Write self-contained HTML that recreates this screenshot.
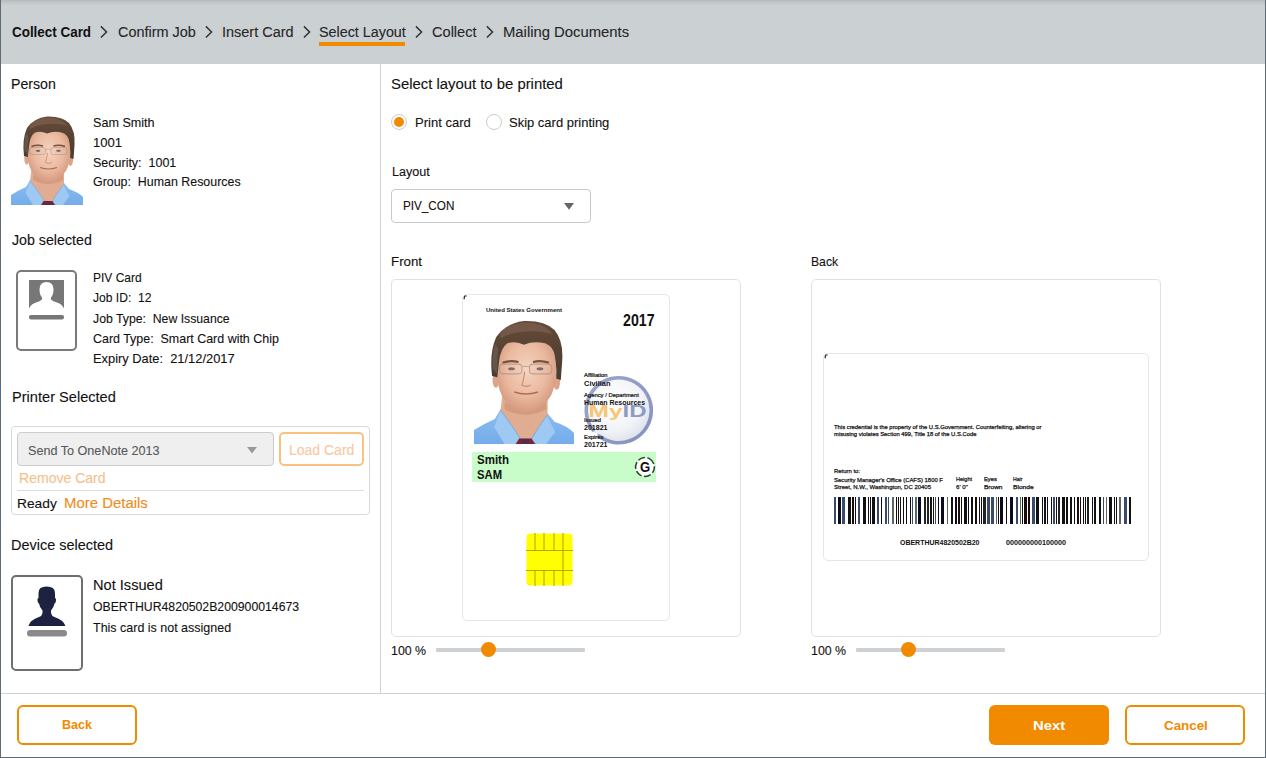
<!DOCTYPE html>
<html><head><meta charset="utf-8"><style>
html,body{margin:0;padding:0;}
body{width:1266px;height:758px;position:relative;overflow:hidden;background:#fff;font-family:"Liberation Sans", sans-serif;color:#1e1e1e;}
.t{position:absolute;white-space:nowrap;line-height:1;}
.s{position:absolute;overflow:visible;font-family:"Liberation Sans", sans-serif;white-space:pre;}
</style></head><body>
<svg width="0" height="0" style="position:absolute"><defs>
<radialGradient id="skin" cx="0.5" cy="0.42" r="0.62"><stop offset="0" stop-color="#f5d3bf"/><stop offset="0.55" stop-color="#ebbaa0"/><stop offset="1" stop-color="#cf9278"/></radialGradient>
<linearGradient id="shirt" x1="0" y1="0" x2="0" y2="1"><stop offset="0" stop-color="#8cbef0"/><stop offset="1" stop-color="#74acea"/></linearGradient>
<linearGradient id="hairg" x1="0" y1="0" x2="0" y2="1"><stop offset="0" stop-color="#664a38"/><stop offset="0.6" stop-color="#544032"/><stop offset="1" stop-color="#4a3a30"/></linearGradient>
<filter id="soft" x="-5%" y="-5%" width="110%" height="110%"><feGaussianBlur stdDeviation="0.35"/></filter>
<symbol id="face" viewBox="0 0 72 90">
<g filter="url(#soft)">
<path d="M0,90 L0,80 Q8,75 15,72 L19,65 L53,68 L58,74 Q67,77 72,82 L72,90Z" fill="url(#shirt)"/>
<path d="M21,50 L53,50 L53,69 L42,86 L32,86 L19,66Z" fill="#e0ad92"/>
<path d="M22,60 Q37,69 52,60 L52,65 Q37,73 22,65Z" fill="#c8896c" opacity="0.5"/>
<path d="M19,65.5 Q27,76 34,87 L30,90 L22,90 Q17,82 14.5,78Z" fill="#9dc9f3"/>
<path d="M52.5,69.5 Q46,78 41,87 L45,90 L52,90 Q56,84 58.5,81.5Z" fill="#9dc9f3"/>
<path d="M19,65.5 Q27,76 34,87" fill="none" stroke="#6496d2" stroke-width="0.6" opacity="0.7"/>
<path d="M52.5,69.5 Q46,78 41,87" fill="none" stroke="#6496d2" stroke-width="0.6" opacity="0.7"/>
<path d="M32.5,86 L41.5,86 L44,90 L30,90Z" fill="#7a2838"/>
<path d="M35,86.5 L39,86.5 L40,90 L34,90Z" fill="#3a2a5a" opacity="0.5"/>
<ellipse cx="15.8" cy="44" rx="2.5" ry="5.5" fill="#dba58a"/>
<ellipse cx="59.5" cy="45" rx="2.5" ry="6" fill="#dba58a"/>
<path d="M16.5,33 Q16,14 37,13 Q59,14 59,33 Q59.5,47 55.5,55 Q49,66 37.5,68.5 Q26,66 20,55 Q16,47 16.5,33Z" fill="url(#skin)"/>
<path d="M13,41 Q11,24 16,13 Q23,3 36,1.5 Q51,1 58,8 Q64.5,16 63.5,30 L62.5,44 L59.3,43 Q59.5,31 57.5,24 Q55,17.5 48,17 Q42,16 36,18.5 Q30,15.5 24,17.5 Q19,21 18,31 L16.8,42Z" fill="url(#hairg)"/>
<path d="M19,9 Q28,2.5 38,2.5 Q51,3 57,11 Q47,8 38,9 Q27,9.5 19,14Z" fill="#7c604e" opacity="0.7"/>
<path d="M13.5,36 Q12.5,26 15.5,18 L17.5,22 Q16.5,30 16.8,40Z" fill="#7a6a60" opacity="0.5"/>
<path d="M20.5,31.5 Q26,29.5 32,31" fill="none" stroke="#74523e" stroke-width="1.5"/>
<path d="M42.5,31 Q48,29.5 54,31.5" fill="none" stroke="#74523e" stroke-width="1.5"/>
<ellipse cx="27" cy="35.8" rx="2.4" ry="1.1" fill="#7a6a6e"/>
<ellipse cx="47.5" cy="35.8" rx="2.4" ry="1.1" fill="#7a6a6e"/>
<g fill="none" stroke="#a89088" stroke-width="0.75" opacity="0.7"><rect x="18.5" y="32.5" width="16" height="7" rx="2.5"/><rect x="40" y="32.5" width="16" height="7" rx="2.5"/><path d="M34.5,34.5 Q37,33.5 40,34.5"/></g>
<path d="M36.5,38 Q35.5,45 34.5,47.5 Q37.5,49.5 41,47.5" fill="none" stroke="#c68b70" stroke-width="0.8"/>
<path d="M29,52.5 Q37.5,55.5 46,52.5" fill="none" stroke="#b06a58" stroke-width="1.2"/>
</g>
</symbol></defs></svg>
<div style="position:absolute;left:0px;top:0px;width:1266px;height:64px;background:linear-gradient(#b4b9bc 0px,#c4c9cc 3px,#cbd0d3 6px,#cbd0d3 100%);"></div>
<svg class="s" style="left:11.84px;top:19.65px" width="92.9" height="22.1"><text x="0" y="17.25" font-size="13.8" font-weight="700" fill="#111" textLength="79.06" lengthAdjust="spacingAndGlyphs">Collect Card</text></svg>
<svg style="position:absolute;left:98px;top:24px" width="12" height="16" viewBox="0 0 12 16"><polyline points="2.9,2.4 8.55,8 2.9,13.5" fill="none" stroke="#333" stroke-width="1.5"/></svg>
<svg class="s" style="left:117.56px;top:18.70px" width="91.9" height="22.4"><text x="0" y="17.50" font-size="14" fill="#262626" stroke="#262626" stroke-width="0.1" textLength="77.86" lengthAdjust="spacingAndGlyphs">Confirm Job</text></svg>
<svg style="position:absolute;left:203px;top:24px" width="12" height="16" viewBox="0 0 12 16"><polyline points="2.9,2.4 8.55,8 2.9,13.5" fill="none" stroke="#333" stroke-width="1.5"/></svg>
<svg class="s" style="left:221.80px;top:18.70px" width="85.6" height="22.4"><text x="0" y="17.50" font-size="14" fill="#262626" stroke="#262626" stroke-width="0.1" textLength="71.60" lengthAdjust="spacingAndGlyphs">Insert Card</text></svg>
<svg style="position:absolute;left:301px;top:24px" width="12" height="16" viewBox="0 0 12 16"><polyline points="2.9,2.4 8.55,8 2.9,13.5" fill="none" stroke="#333" stroke-width="1.5"/></svg>
<svg class="s" style="left:318.78px;top:18.70px" width="100.8" height="22.4"><text x="0" y="17.50" font-size="14" fill="#262626" stroke="#262626" stroke-width="0.1" textLength="86.82" lengthAdjust="spacingAndGlyphs">Select Layout</text></svg>
<div style="position:absolute;left:319px;top:42px;width:86px;height:4px;background:#f28a00;"></div>
<svg style="position:absolute;left:413px;top:24px" width="12" height="16" viewBox="0 0 12 16"><polyline points="2.9,2.4 8.55,8 2.9,13.5" fill="none" stroke="#333" stroke-width="1.5"/></svg>
<svg class="s" style="left:432.04px;top:18.70px" width="58.6" height="22.4"><text x="0" y="17.50" font-size="14" fill="#262626" stroke="#262626" stroke-width="0.1" textLength="44.56" lengthAdjust="spacingAndGlyphs">Collect</text></svg>
<svg style="position:absolute;left:484px;top:24px" width="12" height="16" viewBox="0 0 12 16"><polyline points="2.9,2.4 8.55,8 2.9,13.5" fill="none" stroke="#333" stroke-width="1.5"/></svg>
<svg class="s" style="left:503.02px;top:18.70px" width="140.1" height="22.4"><text x="0" y="17.50" font-size="14" fill="#262626" stroke="#262626" stroke-width="0.1" textLength="126.08" lengthAdjust="spacingAndGlyphs">Mailing Documents</text></svg>
<div style="position:absolute;left:0px;top:0px;width:1px;height:758px;background:#5e6a76;"></div>
<div style="position:absolute;left:1265px;top:0px;width:1px;height:758px;background:#5e6a76;"></div>
<div style="position:absolute;left:0px;top:757px;width:1266px;height:1px;background:#5e6a76;"></div>
<div style="position:absolute;left:380px;top:64px;width:1px;height:629px;background:#cdd2d5;"></div>
<div style="position:absolute;left:1px;top:693px;width:1264px;height:1px;background:#cdd2d5;"></div>
<svg class="s" style="left:10.78px;top:71.00px" width="58.9" height="22.4"><text x="0" y="17.50" font-size="14" fill="#111" stroke="#111" stroke-width="0.1" textLength="44.86" lengthAdjust="spacingAndGlyphs">Person</text></svg>
<svg style="position:absolute;left:11px;top:115px" width="72" height="90" viewBox="0 0 72 90"><use href="#face"/></svg>
<svg class="s" style="left:92.80px;top:111.20px" width="74.0" height="19.8"><text x="0" y="15.50" font-size="12.4" fill="#111" stroke="#111" stroke-width="0.1" textLength="61.60" lengthAdjust="spacingAndGlyphs">Sam Smith</text></svg>
<svg class="s" style="left:92.80px;top:130.85px" width="41.5" height="19.8"><text x="0" y="15.50" font-size="12.4" fill="#111" stroke="#111" stroke-width="0.1" textLength="29.08" lengthAdjust="spacingAndGlyphs">1001</text></svg>
<svg class="s" style="left:92.80px;top:150.50px" width="95.7" height="19.8"><text x="0" y="15.50" font-size="12.4" fill="#111" stroke="#111" stroke-width="0.1" textLength="83.32" lengthAdjust="spacingAndGlyphs">Security:  1001</text></svg>
<svg class="s" style="left:92.80px;top:170.15px" width="160.0" height="19.8"><text x="0" y="15.50" font-size="12.4" fill="#111" stroke="#111" stroke-width="0.1" textLength="147.58" lengthAdjust="spacingAndGlyphs">Group:  Human Resources</text></svg>
<svg class="s" style="left:11.60px;top:227.00px" width="93.8" height="22.4"><text x="0" y="17.50" font-size="14" fill="#111" stroke="#111" stroke-width="0.1" textLength="79.80" lengthAdjust="spacingAndGlyphs">Job selected</text></svg>
<div style="position:absolute;left:16px;top:270px;width:61px;height:81px;box-sizing:border-box;border:2px solid #7a7a7a;border-radius:5px;background:#fff;"></div>
<svg style="position:absolute;left:29px;top:280px" width="36" height="41" viewBox="0 0 36 41"><path d="M0,0H35V28.5Q33,24 28,22.5Q24,21.3 22,19.5V17.5Q24.5,15 24.5,9.5Q24.5,2 17.5,2Q10.5,2 10.5,9.5Q10.5,15 13,17.5V19.5Q11,21.3 7,22.5Q2,24 0,28.5Z" fill="#777"/><rect x="0" y="35" width="35" height="4.5" rx="2" fill="#777"/></svg>
<svg class="s" style="left:92.52px;top:266.10px" width="61.0" height="19.8"><text x="0" y="15.50" font-size="12.4" fill="#111" stroke="#111" stroke-width="0.1" textLength="48.60" lengthAdjust="spacingAndGlyphs">PIV Card</text></svg>
<svg class="s" style="left:92.52px;top:286.30px" width="70.8" height="19.8"><text x="0" y="15.50" font-size="12.4" fill="#111" stroke="#111" stroke-width="0.1" textLength="58.40" lengthAdjust="spacingAndGlyphs">Job ID:  12</text></svg>
<svg class="s" style="left:92.52px;top:306.50px" width="149.1" height="19.8"><text x="0" y="15.50" font-size="12.4" fill="#111" stroke="#111" stroke-width="0.1" textLength="136.70" lengthAdjust="spacingAndGlyphs">Job Type:  New Issuance</text></svg>
<svg class="s" style="left:92.52px;top:326.70px" width="198.2" height="19.8"><text x="0" y="15.50" font-size="12.4" fill="#111" stroke="#111" stroke-width="0.1" textLength="185.84" lengthAdjust="spacingAndGlyphs">Card Type:  Smart Card with Chip</text></svg>
<svg class="s" style="left:92.52px;top:346.90px" width="154.0" height="19.8"><text x="0" y="15.50" font-size="12.4" fill="#111" stroke="#111" stroke-width="0.1" textLength="141.60" lengthAdjust="spacingAndGlyphs">Expiry Date:  21/12/2017</text></svg>
<svg class="s" style="left:11.56px;top:384.12px" width="118.1" height="22.9"><text x="0" y="17.88" font-size="14.3" fill="#111" stroke="#111" stroke-width="0.1" textLength="103.84" lengthAdjust="spacingAndGlyphs">Printer Selected</text></svg>
<div style="position:absolute;left:11px;top:426px;width:359px;height:89px;box-sizing:border-box;border:1px solid #d5d9dc;border-radius:4px;background:#fff;"></div>
<div style="position:absolute;left:17px;top:432px;width:257px;height:34px;box-sizing:border-box;border:1px solid #c9cdd0;border-radius:4px;background:#efefef;"></div>
<svg class="s" style="left:27.80px;top:438.50px" width="144.0" height="19.8"><text x="0" y="15.50" font-size="12.4" fill="#595959" stroke="#595959" stroke-width="0.1" textLength="131.60" lengthAdjust="spacingAndGlyphs">Send To OneNote 2013</text></svg>
<svg style="position:absolute;left:246px;top:446px" width="12" height="8" viewBox="0 0 12 8"><path d="M1,1H11L6,7.5Z" fill="#9a9a9a"/></svg>
<div style="position:absolute;left:279px;top:432px;width:85px;height:34px;box-sizing:border-box;border:2px solid #f9c27e;border-radius:5px;background:#fff;"></div>
<svg class="s" style="left:289.30px;top:437.10px" width="79.4" height="22.4"><text x="0" y="17.50" font-size="14" fill="#f8c8a4" stroke="#f8c8a4" stroke-width="0.1" textLength="65.36" lengthAdjust="spacingAndGlyphs">Load Card</text></svg>
<svg class="s" style="left:18.52px;top:465.40px" width="100.6" height="22.4"><text x="0" y="17.50" font-size="14" fill="#f7c08a" stroke="#f7c08a" stroke-width="0.1" textLength="86.60" lengthAdjust="spacingAndGlyphs">Remove Card</text></svg>
<div style="position:absolute;left:17px;top:490px;width:347px;height:1px;background:#dcdfe2;"></div>
<svg class="s" style="left:16.78px;top:490.95px" width="53.2" height="21.4"><text x="0" y="16.75" font-size="13.4" fill="#111" stroke="#111" stroke-width="0.1" textLength="39.82" lengthAdjust="spacingAndGlyphs">Ready</text></svg>
<svg class="s" style="left:63.80px;top:490.20px" width="97.8" height="22.4"><text x="0" y="17.50" font-size="14" fill="#f28a1a" stroke="#f28a1a" stroke-width="0.1" textLength="83.84" lengthAdjust="spacingAndGlyphs">More Details</text></svg>
<svg class="s" style="left:11.15px;top:531.80px" width="116.0" height="22.4"><text x="0" y="17.50" font-size="14" fill="#111" stroke="#111" stroke-width="0.1" textLength="101.99" lengthAdjust="spacingAndGlyphs">Device selected</text></svg>
<div style="position:absolute;left:11px;top:575px;width:72px;height:96px;box-sizing:border-box;border:2px solid #6e6e6e;border-radius:5px;background:#fff;"></div>
<svg style="position:absolute;left:27px;top:585px" width="41" height="53" viewBox="0 0 41 53"><path d="M1.5,41Q3,35 12,32Q15,31 15.5,28L15.5,25.5Q12.5,22 12,18.5Q10.5,18 10.5,14.5Q10.5,13 11.5,13L11.5,8Q11.5,1.6 19.5,1.6Q28,1.6 28,8L28,13Q29,13 29,14.5Q29,18 27.5,18.5Q27,22 24,25.5L24,28Q24.5,31 27.5,32Q36.5,35 38.5,41Z" fill="#1c2240"/><rect x="0" y="45" width="40" height="6.5" rx="3.2" fill="#8a8a8a"/></svg>
<svg class="s" style="left:93.30px;top:571.80px" width="83.9" height="22.4"><text x="0" y="17.50" font-size="14" fill="#111" stroke="#111" stroke-width="0.1" textLength="69.86" lengthAdjust="spacingAndGlyphs">Not Issued</text></svg>
<svg class="s" style="left:93.00px;top:595.91px" width="218.2" height="19.4"><text x="0" y="15.19" font-size="12.15" fill="#111" stroke="#111" stroke-width="0.1" textLength="206.10" lengthAdjust="spacingAndGlyphs">OBERTHUR4820502B200900014673</text></svg>
<svg class="s" style="left:93.00px;top:616.96px" width="150.4" height="19.8"><text x="0" y="15.44" font-size="12.35" fill="#111" stroke="#111" stroke-width="0.1" textLength="138.10" lengthAdjust="spacingAndGlyphs">This card is not assigned</text></svg>
<svg class="s" style="left:390.80px;top:70.80px" width="185.9" height="22.4"><text x="0" y="17.50" font-size="14" fill="#111" stroke="#111" stroke-width="0.1" textLength="171.86" lengthAdjust="spacingAndGlyphs">Select layout to be printed</text></svg>
<div style="position:absolute;left:391px;top:114px;width:16px;height:16px;box-sizing:border-box;border:1px solid #c6cdd1;border-radius:50%;background:#fff;"></div>
<div style="position:absolute;left:394px;top:117px;width:10px;height:10px;border-radius:50%;background:#f28a00;"></div>
<svg class="s" style="left:414.78px;top:110.65px" width="68.5" height="20.2"><text x="0" y="15.75" font-size="12.6" fill="#111" stroke="#111" stroke-width="0.1" textLength="55.86" lengthAdjust="spacingAndGlyphs">Print card</text></svg>
<div style="position:absolute;left:486px;top:114px;width:16px;height:16px;box-sizing:border-box;border:1px solid #c6cdd1;border-radius:50%;background:#fff;"></div>
<svg class="s" style="left:509.02px;top:110.65px" width="113.0" height="20.2"><text x="0" y="15.75" font-size="12.6" fill="#111" stroke="#111" stroke-width="0.1" textLength="100.36" lengthAdjust="spacingAndGlyphs">Skip card printing</text></svg>
<svg class="s" style="left:391.56px;top:160.73px" width="50.1" height="19.7"><text x="0" y="15.38" font-size="12.3" fill="#111" stroke="#111" stroke-width="0.1" textLength="37.80" lengthAdjust="spacingAndGlyphs">Layout</text></svg>
<div style="position:absolute;left:391px;top:189px;width:200px;height:34px;box-sizing:border-box;border:1px solid #c6cacd;border-radius:4px;background:#fff;"></div>
<svg class="s" style="left:402.56px;top:195.10px" width="63.3" height="19.2"><text x="0" y="15.00" font-size="12" fill="#111" stroke="#111" stroke-width="0.1" textLength="51.34" lengthAdjust="spacingAndGlyphs">PIV_CON</text></svg>
<svg style="position:absolute;left:563px;top:202px" width="12" height="9" viewBox="0 0 12 9"><path d="M1,1H11L6,7.8Z" fill="#666"/></svg>
<svg class="s" style="left:391.30px;top:250.30px" width="43.9" height="20.5"><text x="0" y="16.00" font-size="12.8" fill="#111" stroke="#111" stroke-width="0.1" textLength="31.08" lengthAdjust="spacingAndGlyphs">Front</text></svg>
<svg class="s" style="left:811.04px;top:249.90px" width="39.9" height="20.5"><text x="0" y="16.00" font-size="12.8" fill="#111" stroke="#111" stroke-width="0.1" textLength="27.08" lengthAdjust="spacingAndGlyphs">Back</text></svg>
<div style="position:absolute;left:391px;top:279px;width:350px;height:358px;box-sizing:border-box;border:1px solid #dfe2e4;border-radius:5px;background:#fff;"></div>
<div style="position:absolute;left:811px;top:279px;width:350px;height:358px;box-sizing:border-box;border:1px solid #dfe2e4;border-radius:5px;background:#fff;"></div>
<div style="position:absolute;left:462px;top:294px;width:208px;height:327px;box-sizing:border-box;border:1px solid #e6e6e6;border-radius:5px;background:#fff;"></div>
<svg style="position:absolute;left:462.5px;top:294.8px" width="5" height="5" viewBox="0 0 5 5"><path d="M0.6,4.2 Q0.6,1.2 1.5,0.4 L3.6,0.4 L3.6,1.6 L1.9,1.6 L1.7,4.2Z" fill="#111"/></svg>
<svg class="s" style="left:485.50px;top:304.30px" width="82.0" height="9.6"><text x="0" y="7.50" font-size="6" font-weight="700" fill="#111" textLength="76.00" lengthAdjust="spacingAndGlyphs">United States Government</text></svg>
<svg class="s" style="left:623.20px;top:306.15px" width="47.8" height="25.9"><text x="0" y="20.25" font-size="16.2" font-weight="700" fill="#111" textLength="31.60" lengthAdjust="spacingAndGlyphs">2017</text></svg>
<svg style="position:absolute;left:474px;top:319px" width="100" height="125" viewBox="0 0 72 90" preserveAspectRatio="none"><use href="#face"/></svg>
<svg style="position:absolute;left:577px;top:369px" width="80" height="80" viewBox="0 0 80 80">
<defs><radialGradient id="lg" cx="0.42" cy="0.38" r="0.65"><stop offset="0" stop-color="#ffffff"/><stop offset="0.7" stop-color="#f2f3f7"/><stop offset="1" stop-color="#dfe2ec"/></radialGradient>
<linearGradient id="ringg" x1="0" y1="0" x2="1" y2="1"><stop offset="0" stop-color="#9aa6cc"/><stop offset="1" stop-color="#8592bd"/></linearGradient></defs>
<circle cx="40.5" cy="40" r="32.5" fill="url(#lg)"/>
<path d="M16,61 A32.5,32.5 0 1 1 22,67" fill="none" stroke="url(#ringg)" stroke-width="3.6" stroke-linecap="round"/>
<text x="11.5" y="47.7" font-family="Liberation Sans" font-weight="700" font-size="17" fill="#f6c671" textLength="34" lengthAdjust="spacingAndGlyphs">My</text>
<text x="45.5" y="47.7" font-family="Liberation Sans" font-weight="700" font-size="17" fill="#8e9ac4" textLength="24" lengthAdjust="spacingAndGlyphs">ID</text>
</svg>
<svg class="s" style="left:584.00px;top:371.35px" width="28.5" height="8.0"><text x="0" y="6.25" font-size="5" fill="#111" stroke="#111" stroke-width="0.2" textLength="23.50" lengthAdjust="spacingAndGlyphs">Affiliation</text></svg>
<svg class="s" style="left:584.00px;top:378.38px" width="33.0" height="10.4"><text x="0" y="8.12" font-size="6.5" font-weight="700" fill="#111" textLength="26.50" lengthAdjust="spacingAndGlyphs">Civilian</text></svg>
<svg class="s" style="left:584.00px;top:389.85px" width="60.4" height="8.6"><text x="0" y="6.75" font-size="5.4" fill="#111" stroke="#111" stroke-width="0.2" textLength="55.00" lengthAdjust="spacingAndGlyphs">Agency / Department</text></svg>
<svg class="s" style="left:584.00px;top:396.65px" width="67.6" height="10.6"><text x="0" y="8.25" font-size="6.6" font-weight="700" fill="#111" textLength="61.00" lengthAdjust="spacingAndGlyphs">Human Resources</text></svg>
<svg class="s" style="left:584.00px;top:416.35px" width="22.0" height="8.0"><text x="0" y="6.25" font-size="5" fill="#111" stroke="#111" stroke-width="0.2" textLength="17.00" lengthAdjust="spacingAndGlyphs">Issued</text></svg>
<svg class="s" style="left:584.00px;top:422.27px" width="30.0" height="10.4"><text x="0" y="8.12" font-size="6.5" font-weight="700" fill="#111" textLength="23.50" lengthAdjust="spacingAndGlyphs">201821</text></svg>
<svg class="s" style="left:584.00px;top:432.95px" width="24.5" height="8.0"><text x="0" y="6.25" font-size="5" fill="#111" stroke="#111" stroke-width="0.2" textLength="19.50" lengthAdjust="spacingAndGlyphs">Expires</text></svg>
<svg class="s" style="left:584.00px;top:439.48px" width="30.0" height="10.4"><text x="0" y="8.12" font-size="6.5" font-weight="700" fill="#111" textLength="23.50" lengthAdjust="spacingAndGlyphs">201721</text></svg>
<div style="position:absolute;left:472px;top:452px;width:184px;height:30px;background:#c8fcc8;"></div>
<svg class="s" style="left:477.00px;top:449.40px" width="44.0" height="19.2"><text x="0" y="15.00" font-size="12" font-weight="700" fill="#111" textLength="32.00" lengthAdjust="spacingAndGlyphs">Smith</text></svg>
<svg class="s" style="left:477.00px;top:464.10px" width="37.0" height="19.2"><text x="0" y="15.00" font-size="12" font-weight="700" fill="#111" textLength="25.00" lengthAdjust="spacingAndGlyphs">SAM</text></svg>
<svg style="position:absolute;left:634px;top:456px" width="22" height="22" viewBox="0 0 22 22"><circle cx="11" cy="11" r="9.4" fill="#fff" stroke="#2e3e2e" stroke-width="1.5" stroke-dasharray="7 2.4" transform="rotate(-62 11 11)"/></svg>
<svg class="s" style="left:639.80px;top:454.75px" width="24.0" height="22.1"><text x="0" y="17.25" font-size="13.8" font-weight="700" fill="#111" textLength="10.20" lengthAdjust="spacingAndGlyphs">G</text></svg>
<svg style="position:absolute;left:526px;top:533px" width="47" height="53" viewBox="0 0 47 53">
<rect x="0.5" y="0.5" width="46" height="52" rx="4" fill="#ffff00"/>
<g stroke="#bda500" stroke-width="1.1">
<line x1="0" y1="17.5" x2="47" y2="17.5"/><line x1="0" y1="37.5" x2="47" y2="37.5"/>
<line x1="9" y1="0" x2="9" y2="17.5"/><line x1="18" y1="0" x2="18" y2="17.5"/><line x1="28" y1="0" x2="28" y2="17.5"/>
<line x1="9" y1="37.5" x2="9" y2="53"/><line x1="18" y1="37.5" x2="18" y2="53"/><line x1="28" y1="37.5" x2="28" y2="53"/>
<line x1="37" y1="0" x2="37" y2="53"/>
</g></svg>
<div style="position:absolute;left:823px;top:353px;width:326px;height:208px;box-sizing:border-box;border:1px solid #e6e6e6;border-radius:5px;background:#fff;"></div>
<svg style="position:absolute;left:823.5px;top:353.8px" width="5" height="5" viewBox="0 0 5 5"><path d="M0.6,4.2 Q0.6,1.2 1.5,0.4 L3.6,0.4 L3.6,1.6 L1.9,1.6 L1.7,4.2Z" fill="#111"/></svg>
<svg class="s" style="left:834.00px;top:421.10px" width="213.5" height="9.6"><text x="0" y="7.50" font-size="6" fill="#111" stroke="#111" stroke-width="0.25" textLength="207.50" lengthAdjust="spacingAndGlyphs">This credential is the property of the U.S.Government. Counterfeiting, altering or</text></svg>
<svg class="s" style="left:834.00px;top:428.00px" width="148.5" height="9.6"><text x="0" y="7.50" font-size="6" fill="#111" stroke="#111" stroke-width="0.25" textLength="142.50" lengthAdjust="spacingAndGlyphs">misusing violates Section 499, Title 18 of the U.S.Code</text></svg>
<svg class="s" style="left:834.00px;top:464.90px" width="32.0" height="9.6"><text x="0" y="7.50" font-size="6" fill="#111" stroke="#111" stroke-width="0.25" textLength="26.00" lengthAdjust="spacingAndGlyphs">Return to:</text></svg>
<svg class="s" style="left:834.00px;top:473.90px" width="115.0" height="9.6"><text x="0" y="7.50" font-size="6" fill="#111" stroke="#111" stroke-width="0.25" textLength="109.00" lengthAdjust="spacingAndGlyphs">Security Manager's Office (CAFS) 1800 F</text></svg>
<svg class="s" style="left:834.00px;top:481.40px" width="103.0" height="9.6"><text x="0" y="7.50" font-size="6" fill="#111" stroke="#111" stroke-width="0.25" textLength="97.00" lengthAdjust="spacingAndGlyphs">Street, N.W., Washington, DC 20405</text></svg>
<svg class="s" style="left:956.00px;top:472.90px" width="22.0" height="9.6"><text x="0" y="7.50" font-size="6" fill="#111" stroke="#111" stroke-width="0.25" textLength="16.00" lengthAdjust="spacingAndGlyphs">Height</text></svg>
<svg class="s" style="left:984.20px;top:472.90px" width="18.8" height="9.6"><text x="0" y="7.50" font-size="6" fill="#111" stroke="#111" stroke-width="0.25" textLength="12.80" lengthAdjust="spacingAndGlyphs">Eyes</text></svg>
<svg class="s" style="left:1013.20px;top:472.90px" width="15.4" height="9.6"><text x="0" y="7.50" font-size="6" fill="#111" stroke="#111" stroke-width="0.25" textLength="9.40" lengthAdjust="spacingAndGlyphs">Hair</text></svg>
<svg class="s" style="left:956.00px;top:481.40px" width="17.8" height="9.6"><text x="0" y="7.50" font-size="6" fill="#111" stroke="#111" stroke-width="0.25" textLength="11.80" lengthAdjust="spacingAndGlyphs">6' 0"</text></svg>
<svg class="s" style="left:984.20px;top:481.40px" width="24.5" height="9.6"><text x="0" y="7.50" font-size="6" fill="#111" stroke="#111" stroke-width="0.25" textLength="18.50" lengthAdjust="spacingAndGlyphs">Brown</text></svg>
<svg class="s" style="left:1013.20px;top:481.40px" width="26.6" height="9.6"><text x="0" y="7.50" font-size="6" fill="#111" stroke="#111" stroke-width="0.25" textLength="20.60" lengthAdjust="spacingAndGlyphs">Blonde</text></svg>
<svg style="position:absolute;left:834px;top:497px" width="298" height="27" viewBox="0 0 298 27" shape-rendering="crispEdges"><rect x="0.00" y="0" width="2.00" height="27" fill="#3a4a6a"/><rect x="4.00" y="0" width="3.00" height="27" fill="#0a0a20"/><rect x="8.00" y="0" width="3.00" height="27" fill="#3a4a6a"/><rect x="14.00" y="0" width="3.00" height="27" fill="#111"/><rect x="18.00" y="0" width="2.00" height="27" fill="#1a0a0a"/><rect x="21.00" y="0" width="1.00" height="27" fill="#111"/><rect x="24.00" y="0" width="2.00" height="27" fill="#3a4a6a"/><rect x="29.00" y="0" width="3.00" height="27" fill="#111"/><rect x="34.00" y="0" width="1.00" height="27" fill="#111"/><rect x="36.00" y="0" width="1.00" height="27" fill="#0a0a20"/><rect x="38.00" y="0" width="3.00" height="27" fill="#111"/><rect x="43.00" y="0" width="2.00" height="27" fill="#3a4a6a"/><rect x="47.00" y="0" width="1.00" height="27" fill="#0a0a20"/><rect x="51.00" y="0" width="2.00" height="27" fill="#3a4a6a"/><rect x="54.00" y="0" width="1.00" height="27" fill="#3a4a6a"/><rect x="58.00" y="0" width="2.00" height="27" fill="#5a6a62"/><rect x="62.00" y="0" width="1.00" height="27" fill="#1a0a0a"/><rect x="64.00" y="0" width="1.00" height="27" fill="#1a0a0a"/><rect x="66.00" y="0" width="1.00" height="27" fill="#111"/><rect x="69.00" y="0" width="1.00" height="27" fill="#1a0a0a"/><rect x="72.00" y="0" width="1.00" height="27" fill="#111"/><rect x="76.00" y="0" width="1.00" height="27" fill="#0a0a20"/><rect x="78.00" y="0" width="1.00" height="27" fill="#3a4a6a"/><rect x="81.00" y="0" width="2.00" height="27" fill="#5a6a62"/><rect x="84.00" y="0" width="3.00" height="27" fill="#0a0a20"/><rect x="90.00" y="0" width="2.00" height="27" fill="#222"/><rect x="93.00" y="0" width="2.00" height="27" fill="#222"/><rect x="96.00" y="0" width="2.00" height="27" fill="#111"/><rect x="99.00" y="0" width="1.00" height="27" fill="#111"/><rect x="101.00" y="0" width="1.00" height="27" fill="#3a4a6a"/><rect x="104.00" y="0" width="1.00" height="27" fill="#0a0a20"/><rect x="107.00" y="0" width="3.00" height="27" fill="#0a0a20"/><rect x="113.00" y="0" width="1.00" height="27" fill="#5a6a62"/><rect x="117.00" y="0" width="2.00" height="27" fill="#111"/><rect x="121.00" y="0" width="2.00" height="27" fill="#0a0a20"/><rect x="124.00" y="0" width="2.00" height="27" fill="#1a0a0a"/><rect x="127.00" y="0" width="1.00" height="27" fill="#111"/><rect x="130.00" y="0" width="3.00" height="27" fill="#111"/><rect x="134.00" y="0" width="1.00" height="27" fill="#0a0a20"/><rect x="137.00" y="0" width="2.00" height="27" fill="#111"/><rect x="141.00" y="0" width="2.00" height="27" fill="#1a0a0a"/><rect x="145.00" y="0" width="1.00" height="27" fill="#111"/><rect x="147.00" y="0" width="1.00" height="27" fill="#0a0a20"/><rect x="149.00" y="0" width="3.00" height="27" fill="#222"/><rect x="153.00" y="0" width="3.00" height="27" fill="#3a4a6a"/><rect x="157.00" y="0" width="3.00" height="27" fill="#3a4a6a"/><rect x="162.00" y="0" width="1.00" height="27" fill="#5a6a62"/><rect x="164.00" y="0" width="1.00" height="27" fill="#1a0a0a"/><rect x="166.00" y="0" width="3.00" height="27" fill="#0a0a20"/><rect x="172.00" y="0" width="1.00" height="27" fill="#111"/><rect x="176.00" y="0" width="3.00" height="27" fill="#0a0a20"/><rect x="182.00" y="0" width="2.00" height="27" fill="#3a4a6a"/><rect x="186.00" y="0" width="1.00" height="27" fill="#5a6a62"/><rect x="188.00" y="0" width="1.00" height="27" fill="#111"/><rect x="190.00" y="0" width="3.00" height="27" fill="#1a0a0a"/><rect x="194.00" y="0" width="2.00" height="27" fill="#1a0a0a"/><rect x="198.00" y="0" width="3.00" height="27" fill="#3a4a6a"/><rect x="202.00" y="0" width="3.00" height="27" fill="#111"/><rect x="208.00" y="0" width="1.00" height="27" fill="#111"/><rect x="210.00" y="0" width="2.00" height="27" fill="#111"/><rect x="213.00" y="0" width="1.00" height="27" fill="#0a0a20"/><rect x="217.00" y="0" width="1.00" height="27" fill="#111"/><rect x="219.00" y="0" width="2.00" height="27" fill="#3a4a6a"/><rect x="222.00" y="0" width="1.00" height="27" fill="#111"/><rect x="224.00" y="0" width="2.00" height="27" fill="#222"/><rect x="228.00" y="0" width="3.00" height="27" fill="#111"/><rect x="232.00" y="0" width="2.00" height="27" fill="#111"/><rect x="236.00" y="0" width="2.00" height="27" fill="#111"/><rect x="240.00" y="0" width="1.00" height="27" fill="#111"/><rect x="243.00" y="0" width="2.00" height="27" fill="#1a0a0a"/><rect x="246.00" y="0" width="1.00" height="27" fill="#111"/><rect x="249.00" y="0" width="1.00" height="27" fill="#1a0a0a"/><rect x="251.00" y="0" width="1.00" height="27" fill="#111"/><rect x="253.00" y="0" width="2.00" height="27" fill="#222"/><rect x="258.00" y="0" width="1.00" height="27" fill="#111"/><rect x="260.00" y="0" width="2.00" height="27" fill="#111"/><rect x="265.00" y="0" width="2.00" height="27" fill="#111"/><rect x="269.00" y="0" width="1.00" height="27" fill="#3a4a6a"/><rect x="272.00" y="0" width="1.00" height="27" fill="#5a6a62"/><rect x="275.00" y="0" width="3.00" height="27" fill="#111"/><rect x="280.00" y="0" width="1.00" height="27" fill="#111"/><rect x="282.00" y="0" width="1.00" height="27" fill="#1a0a0a"/><rect x="285.00" y="0" width="2.00" height="27" fill="#5a6a62"/><rect x="290.00" y="0" width="3.00" height="27" fill="#3a4a6a"/><rect x="295.00" y="0" width="2.00" height="27" fill="#111"/></svg>
<svg class="s" style="left:900.00px;top:537.00px" width="85.9" height="10.2"><text x="0" y="8.00" font-size="6.4" font-weight="700" fill="#111" textLength="79.50" lengthAdjust="spacingAndGlyphs">OBERTHUR4820502B20</text></svg>
<svg class="s" style="left:1005.50px;top:537.00px" width="66.4" height="10.2"><text x="0" y="8.00" font-size="6.4" font-weight="700" fill="#111" textLength="60.00" lengthAdjust="spacingAndGlyphs">000000000100000</text></svg>
<svg class="s" style="left:391.30px;top:640.20px" width="47.1" height="19.2"><text x="0" y="15.00" font-size="12" fill="#111" stroke="#111" stroke-width="0.1" textLength="35.10" lengthAdjust="spacingAndGlyphs">100 %</text></svg>
<div style="position:absolute;left:436px;top:647.5px;width:149px;height:4px;background:#cdd1d4;border-radius:1px;"></div>
<div style="position:absolute;left:480.6px;top:641.6px;width:15.6px;height:15.6px;background:#f28a00;border-radius:50%;"></div>
<svg class="s" style="left:811.30px;top:640.20px" width="47.1" height="19.2"><text x="0" y="15.00" font-size="12" fill="#111" stroke="#111" stroke-width="0.1" textLength="35.10" lengthAdjust="spacingAndGlyphs">100 %</text></svg>
<div style="position:absolute;left:856px;top:647.5px;width:149px;height:4px;background:#cdd1d4;border-radius:1px;"></div>
<div style="position:absolute;left:900.6px;top:641.6px;width:15.6px;height:15.6px;background:#f28a00;border-radius:50%;"></div>
<div style="position:absolute;left:17px;top:705px;width:120px;height:40px;box-sizing:border-box;border:2px solid #f28a00;border-radius:6px;background:#fff;"></div>
<svg class="s" style="left:62.08px;top:713.47px" width="42.5" height="20.0"><text x="0" y="15.62" font-size="12.5" font-weight="700" fill="#f28a00" textLength="30.00" lengthAdjust="spacingAndGlyphs">Back</text></svg>
<div style="position:absolute;left:989px;top:705px;width:120px;height:40px;border-radius:6px;background:#f28a00;"></div>
<svg class="s" style="left:1033.04px;top:713.67px" width="44.6" height="20.0"><text x="0" y="15.62" font-size="12.5" font-weight="700" fill="#fff" textLength="32.10" lengthAdjust="spacingAndGlyphs">Next</text></svg>
<div style="position:absolute;left:1125px;top:705px;width:120px;height:40px;box-sizing:border-box;border:2px solid #f28a00;border-radius:6px;background:#fff;"></div>
<svg class="s" style="left:1163.60px;top:713.67px" width="56.3" height="20.0"><text x="0" y="15.62" font-size="12.5" font-weight="700" fill="#f28a00" textLength="43.80" lengthAdjust="spacingAndGlyphs">Cancel</text></svg>
</body></html>
